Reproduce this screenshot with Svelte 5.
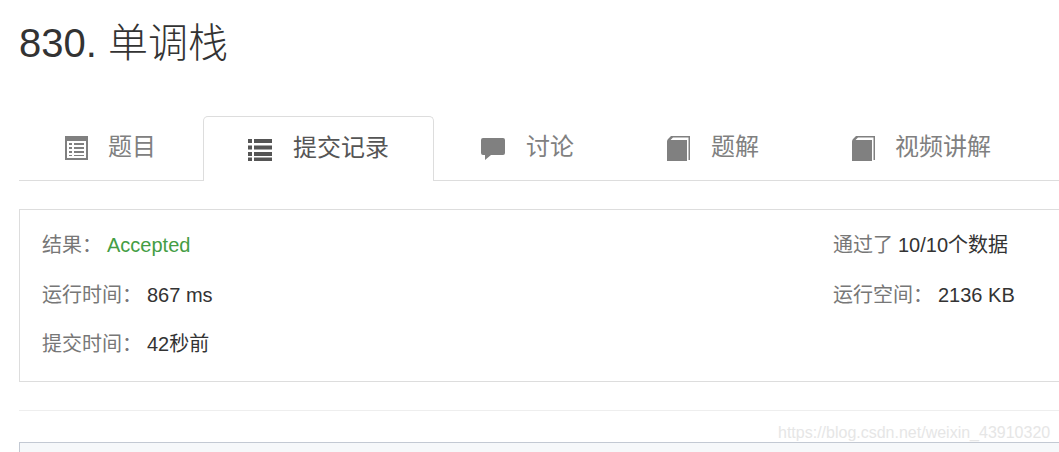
<script>
	const tabs = [
		{ label: '题目', icon: 'table', pad: 44, gap: 19 },
		{ label: '提交记录', icon: 'list', pad: 43, gap: 20, active: true },
		{ label: '讨论', icon: 'comment', pad: 46, gap: 20 },
		{ label: '题解', icon: 'book', pad: 47, gap: 20 },
		{ label: '视频讲解', icon: 'book', pad: 48, gap: 19 }
	]
</script>

{#snippet icon(name)}
	<svg class="icon" viewBox="0 0 26 26" width="26" height="26" aria-hidden="true">
		{#if name === 'table'}
			<path fill="currentColor" fill-rule="evenodd" d="M2 1h23v24H2zM4 6v17h19V6z" />
			<path fill="currentColor" d="M6 8h3v2H6zM11 8h10v2H11zM6 12h3v2H6zM11 12h10v2H11zM6 16h3v2H6zM11 16h10v2H11zM6 20h3v1H6zM11 20h10v1H11z" />
		{:else if name === 'list'}
			<path fill="currentColor" d="M1 3h4v4H1zM7 3h18v4H7zM1 9.500h4v4H1zM7 9.500h18v4H7zM1 16h4v4H1zM7 16h18v4H7zM1 21.500h4v3.500H1zM7 21.500h18v3.500H7z" />
		{:else if name === 'comment'}
			<path fill="currentColor" d="M3 3h20a2 2 0 0 1 2 2v13a2 2 0 0 1-2 2H11l-6 5v-5H3a2 2 0 0 1-2-2V5a2 2 0 0 1 2-2z" />
		{:else}
			<path fill="currentColor" d="M2 6.500Q2 5 3 4l3-3h19v24h-1.500V2.500H8L5.500 5H22v21H2z" />
		{/if}
	</svg>
{/snippet}

<main>
	<h1>830. 单调栈</h1>

	<nav class="tabs">
		{#each tabs as tab}
			<div class="tab" class:active={tab.active} style="padding-left: {tab.pad}px; gap: {tab.gap}px">
				{@render icon(tab.icon)}
				<span>{tab.label}</span>
			</div>
		{/each}
	</nav>

	<section class="result">
		<div class="row">
			<div><span class="label">结果：</span><span class="accepted">Accepted</span></div>
			<div class="right"><span class="label">通过了</span><span class="value">10/10个数据</span></div>
		</div>
		<div class="row">
			<div><span class="label">运行时间：</span><span class="value">867 ms</span></div>
			<div class="right"><span class="label">运行空间：</span><span class="value">2136 KB</span></div>
		</div>
		<div class="row">
			<div><span class="label">提交时间：</span><span class="value">42秒前</span></div>
		</div>
	</section>

	<hr />

	<div class="code"></div>
	<span class="watermark">https://blog.csdn.net/weixin_43910320</span>
</main>

<style>
	:global(body) {
		background: #fff;
		overflow: hidden;
	}

	main {
		position: relative;
		height: 452px;
		padding-left: 19px;
		box-sizing: border-box;
		overflow: hidden;
		font-family: 'Liberation Sans', 'Noto Sans CJK SC', sans-serif;
		color: #333;
	}

	h1 {
		margin: 0;
		padding-top: 20px;
		height: 116px;
		box-sizing: border-box;
		font-size: 40px;
		line-height: 47px;
		font-weight: 300;
	}

	.tabs {
		display: flex;
		height: 64px;
		border-bottom: 1px solid #ddd;
	}

	.tab {
		display: flex;
		flex: none;
		align-items: center;
		box-sizing: border-box;
		width: 184px;
		height: 64px;
		padding-bottom: 8px;
		font-size: 24px;
		color: #808080;
		white-space: nowrap;
	}

	.tab.active {
		width: 231px;
		height: 65px;
		color: #555;
		background: #fff;
		border: 1px solid #ddd;
		border-bottom: none;
		border-radius: 5px 5px 0 0;
	}

	.icon {
		flex: none;
		margin-top: 7px;
	}

	.result {
		margin-top: 28px;
		height: 173px;
		box-sizing: border-box;
		padding: 9px 22px 0;
		border: 1px solid #ddd;
		border-right: none;
		font-size: 20px;
	}

	.row {
		display: flex;
		height: 49.4px;
		align-items: center;
	}

	.right {
		position: absolute;
		left: 833px;
	}

	.label {
		color: #777;
		margin-right: 5px;
	}

	.value {
		color: #333;
	}

	.accepted {
		color: #449d44;
	}

	hr {
		margin: 28px 0 0;
		border: none;
		border-top: 1px solid #eee;
	}

	.code {
		margin-top: 31px;
		height: 30px;
		background: #f6f8fa;
		border: 1px solid #c3c9d3;
		border-right: none;
	}

	.watermark {
		position: absolute;
		left: 778px;
		top: 424px;
		font-size: 16px;
		color: #e6e6e6;
	}
</style>
